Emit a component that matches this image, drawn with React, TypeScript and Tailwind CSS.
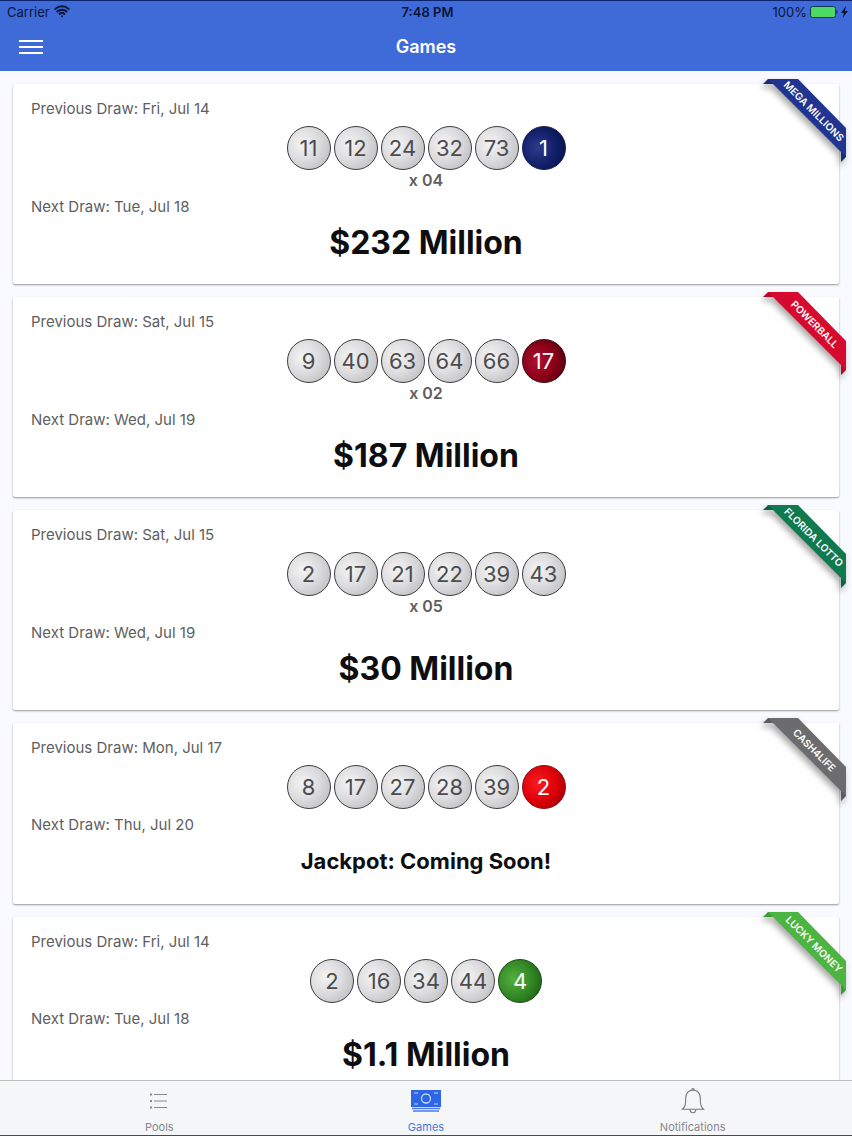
import { Wifi } from 'lucide-react';
import React from 'react';

type BallColor = 'white' | 'navy' | 'crimson' | 'red' | 'green';

interface Ball {
  value: number;
  color: BallColor;
}

interface Game {
  name: string;
  previousDraw: string;
  nextDraw: string;
  balls: Ball[];
  multiplier?: string;
  jackpot?: string;
  ribbon: string;
  ribbonFold: string;
}

const ballStyles: Record<BallColor, string> = {
  white: 'border-[#3c3c3c] text-[#4c4c4e] bg-[radial-gradient(circle_at_35%_40%,#f4f4f5_0%,#dcdcde_45%,#b4b4b6_100%)]',
  navy: 'border-[#101a4a] text-white bg-[radial-gradient(circle_at_35%_50%,#2b3c8c_0%,#12206a_50%,#050c3c_100%)]',
  crimson: 'border-[#3c0410] text-white bg-[radial-gradient(circle_at_35%_50%,#b01230_0%,#8a0018_50%,#40000a_100%)]',
  red: 'border-[#8a0a10] text-white bg-[radial-gradient(circle_at_35%_40%,#fa1c20_0%,#dc0008_50%,#8c0004_100%)]',
  green: 'border-[#1c4a14] text-white bg-[radial-gradient(circle_at_35%_45%,#52b03e_0%,#338826_50%,#1a5010_100%)]',
};

const draw = (numbers: number[], bonus?: number, color: BallColor = 'white'): Ball[] => {
  const balls: Ball[] = numbers.map((value) => ({ value, color: 'white' }));
  return bonus === undefined ? balls : [...balls, { value: bonus, color }];
};

const games: Game[] = [
  {
    name: 'Mega Millions',
    previousDraw: 'Fri, Jul 14',
    nextDraw: 'Tue, Jul 18',
    balls: draw([11, 12, 24, 32, 73], 1, 'navy'),
    multiplier: 'x 04',
    jackpot: '$232 Million',
    ribbon: 'fill-[#1f3590]',
    ribbonFold: 'fill-[#182a78]',
  },
  {
    name: 'Powerball',
    previousDraw: 'Sat, Jul 15',
    nextDraw: 'Wed, Jul 19',
    balls: draw([9, 40, 63, 64, 66], 17, 'crimson'),
    multiplier: 'x 02',
    jackpot: '$187 Million',
    ribbon: 'fill-[#d60a2e]',
    ribbonFold: 'fill-[#b80828]',
  },
  {
    name: 'Florida Lotto',
    previousDraw: 'Sat, Jul 15',
    nextDraw: 'Wed, Jul 19',
    balls: draw([2, 17, 21, 22, 39, 43]),
    multiplier: 'x 05',
    jackpot: '$30 Million',
    ribbon: 'fill-[#10794f]',
    ribbonFold: 'fill-[#0b6340]',
  },
  {
    name: 'Cash4Life',
    previousDraw: 'Mon, Jul 17',
    nextDraw: 'Thu, Jul 20',
    balls: draw([8, 17, 27, 28, 39], 2, 'red'),
    ribbon: 'fill-[#6c6c6e]',
    ribbonFold: 'fill-[#5c5c5e]',
  },
  {
    name: 'Lucky Money',
    previousDraw: 'Fri, Jul 14',
    nextDraw: 'Tue, Jul 18',
    balls: draw([2, 16, 34, 44], 4, 'green'),
    jackpot: '$1.1 Million',
    ribbon: 'fill-[#4cb440]',
    ribbonFold: 'fill-[#3c9c34]',
  },
];

const StatusBar: React.FC = () => (
  <div className="grid h-[22px] grid-cols-3 items-center pr-1 pl-[7px] text-[13px] leading-[22px] text-[#0b1538]">
    <div className="flex items-center gap-1">
      <span>Carrier</span>
      <Wifi className="mb-[2px] h-4 w-4" strokeWidth={3} />
    </div>
    <div className="text-center font-semibold">7:48 PM</div>
    <div className="flex items-center justify-end gap-[3px]">
      <span>100%</span>
      <svg className="h-3 w-7" viewBox="0 0 28 12" aria-label="Battery">
        <rect x="0.5" y="0.5" width="25" height="11" rx="2" fill="#4cd964" stroke="#0b3a50" />
        <path d="M26.5 4v4c1.3-.5 1.3-3.500 0-4z" fill="#0b1538" />
      </svg>
      <svg className="h-3 w-[7px]" viewBox="0 0 7 12" aria-label="Charging">
        <path d="M5 0 0 7h3L1.500 12 7 5H4z" fill="#0b1538" />
      </svg>
    </div>
  </div>
);

const Header: React.FC = () => (
  <header className="shrink-0 border-t border-[#0c2470] bg-[#3e6bd8]">
    <StatusBar />
    <div className="grid h-12 grid-cols-3 items-center px-[19px]">
      <button type="button" aria-label="Menu" className="flex w-6 flex-col gap-1">
        <span className="h-[2px] w-full bg-white" />
        <span className="h-[2px] w-full bg-white" />
        <span className="h-[2px] w-full bg-white" />
      </button>
      <h1 className="text-center text-lg font-semibold text-white">Games</h1>
    </div>
  </header>
);

interface RibbonProps {
  label: string;
  fill: string;
  foldFill: string;
}

const Ribbon: React.FC<RibbonProps> = ({ label, fill, foldFill }) => (
  <div className="absolute -top-[5px] -right-[7px] h-[83px] w-[83px]">
    <svg className="h-full w-full overflow-visible drop-shadow-[-2px_4px_3px_rgba(0,0,0,0.35)]" viewBox="0 0 83 83">
      <path d="M0 5 5 0h6v5zM78 83l5-5v-7h-5z" className={foldFill} />
      <path d="M5 0h30l48 49v29L5 0z" className={fill} />
    </svg>
    <div className="absolute inset-0 flex items-center justify-center pb-5 pl-5">
      <span className="rotate-45 text-[10px] leading-3 font-semibold whitespace-nowrap text-white uppercase">{label}</span>
    </div>
  </div>
);

const GameCard: React.FC<{ game: Game }> = ({ game }) => (
  <article className="relative rounded-xs bg-white px-[18px] pt-[15px] shadow-[0_1px_2px_0_rgba(0,0,0,0.4)]">
    <Ribbon label={game.name} fill={game.ribbon} foldFill={game.ribbonFold} />
    <p className="text-[15px] leading-5 text-[#5e5e60]">Previous Draw: {game.previousDraw}</p>
    <ul className="mt-[7px] flex justify-center gap-[3px]">
      {game.balls.map((ball, index) => (
        <li
          key={index}
          className={`flex h-11 w-11 items-center justify-center rounded-full border text-[22px] leading-7 ${ballStyles[ball.color]}`}
        >
          {ball.value}
        </li>
      ))}
    </ul>
    {game.multiplier && (
      <p className="text-center text-base leading-[21px] font-semibold text-[#5e5e60]">{game.multiplier}</p>
    )}
    <p className="mt-[6px] text-[15px] leading-5 text-[#5e5e60]">Next Draw: {game.nextDraw}</p>
    {game.jackpot ? (
      <h2 className="pt-[6px] pb-[21px] text-center text-[32px] leading-10 font-bold text-[#0e0e10]">{game.jackpot}</h2>
    ) : (
      <h2 className="pt-3 pb-[29px] text-center text-[22px] leading-7 font-bold text-[#0e0e10]">Jackpot: Coming Soon!</h2>
    )}
  </article>
);

const PoolsIcon: React.FC = () => (
  <svg className="h-7 w-8" viewBox="0 0 32 28" fill="none" stroke="#8a8a8c">
    <path d="M11 7.500h13M11 14h13M11 20.500h13" strokeWidth="1.200" />
    <path d="M7 7.500h2M7 14h2M7 20.500h2" strokeWidth="2" />
  </svg>
);

const GamesIcon: React.FC = () => (
  <svg className="h-7 w-8" viewBox="0 0 32 28" fill="none">
    <path d="M1 3h30v17H1z" fill="#2f66e8" />
    <path d="M2 21.500h28M3 24h26" stroke="#4a7aec" strokeWidth="1.400" />
    <circle cx="16" cy="11.500" r="4.500" stroke="#c4d6fc" strokeWidth="1.300" />
    <path d="M4 6h4M24 6h4M4 17h4M24 17h4" stroke="#c4d6fc" strokeWidth="1.200" />
  </svg>
);

const NotificationsIcon: React.FC = () => (
  <svg className="h-7 w-8" viewBox="0 0 32 28" fill="none" stroke="#77777a" strokeWidth="1.100">
    <path d="M16 3c-5 .4-7.300 3.800-7.300 8.500 0 6.500-.6 8.500-3.200 10.700h21c-2.600-2.200-3.200-4.200-3.200-10.700 0-4.700-2.300-8.100-7.300-8.500z" />
    <path d="M13.200 22.500c0 4.300 5.600 4.300 5.600 0M14.800 3c0-1.800 2.400-1.800 2.400 0" />
  </svg>
);

const tabs = [
  { label: 'Pools', icon: PoolsIcon, active: false },
  { label: 'Games', icon: GamesIcon, active: true },
  { label: 'Notifications', icon: NotificationsIcon, active: false },
];

const TabBar: React.FC = () => (
  <nav className="grid shrink-0 grid-cols-3 border-t border-b border-t-[#bcbcbe] border-b-[#4a4a4c] bg-[#f5f6f8] px-[26px]">
    {tabs.map(({ label, icon: Icon, active }) => (
      <button
        key={label}
        type="button"
        className={`flex flex-col items-center gap-[5px] pt-[6px] pb-px text-[11px] leading-[14px] ${active ? 'text-[#4a76dc]' : 'text-[#88888a]'}`}
      >
        <Icon />
        <span>{label}</span>
      </button>
    ))}
  </nav>
);

const App: React.FC = () => (
  <div className="flex h-screen flex-col bg-[#f9faff] font-['Inter',sans-serif]">
    <Header />
    <main className="flex min-h-0 flex-1 flex-col overflow-y-auto px-[13px] pt-[13px] [scrollbar-width:none]">
      <div className="flex flex-col gap-[13px] pb-3">
        {games.map((game) => (
          <GameCard key={game.name} game={game} />
        ))}
      </div>
    </main>
    <TabBar />
  </div>
);

export default App;
